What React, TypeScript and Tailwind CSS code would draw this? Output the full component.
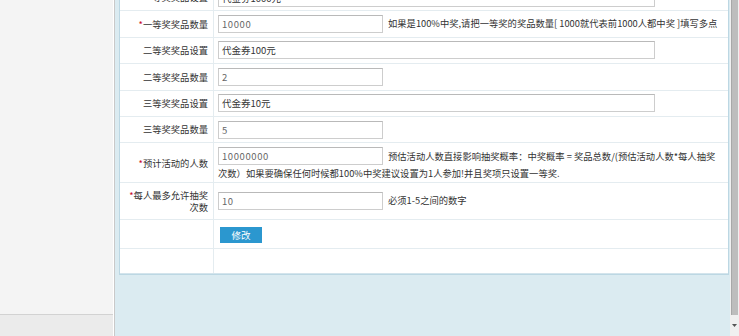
import React from 'react';

const cn = '"Noto Sans CJK SC", "Liberation Sans", sans-serif';

interface Field {
    id: string;
    label: string;
    required?: boolean;
    value: string;
    wide?: boolean;
    hint?: string;
    numeric?: boolean;
}

const fields: Field[] = [
    { id: 'p1set', label: '一等奖奖品设置', required: true, value: '代金券1000元', wide: true },
    { id: 'p1num', label: '一等奖奖品数量', required: true, value: '10000', numeric: true, hint: '如果是100%中奖,请把一等奖的奖品数量[ 1000就代表前1000人都中奖 ]填写多点' },
    { id: 'p2set', label: '二等奖奖品设置', value: '代金券100元', wide: true },
    { id: 'p2num', label: '二等奖奖品数量', value: '2', numeric: true },
    { id: 'p3set', label: '三等奖奖品设置', value: '代金券10元', wide: true },
    { id: 'p3num', label: '三等奖奖品数量', value: '5', numeric: true }
];

const TextInput: React.FC<{ value: string; wide?: boolean; numeric?: boolean }> = ({ value, wide, numeric }) => (
    <input
        readOnly
        value={value}
        className={`${wide ? 'w-[437px]' : 'w-[165px]'} h-[18px] border border-[#cdcdcd] border-t-[#b9b9b9] bg-white px-[3px] align-middle text-[9.5px] outline-none ${numeric ? 'text-[#666] tracking-[0.6px]' : 'text-[#333]'}`}
        style={{ fontFamily: cn }}
    />
);

const Label: React.FC<{ text: string; required?: boolean }> = ({ text, required }) => (
    <div className="w-[94px] shrink-0 border-r border-[#e4ecf0] pr-[5px] pl-[4px] flex items-center justify-end text-right leading-[12.5px]">
        <span>
            {required && <span className="text-[#c8102e]">*</span>}
            {text}
        </span>
    </div>
);

export default function App() {
    return (
        <div className="w-[739px] h-[336px] overflow-hidden flex text-[9.3px] text-[#333]" style={{ fontFamily: cn }}>
            {/* left menu column */}
            <aside className="w-[113px] shrink-0 flex flex-col bg-[#f4f4f4]">
                <div className="h-[314px]" />
                <div className="flex-1 border-t border-[#d2d2d2] bg-[#ebebeb]" />
            </aside>
            <div className="w-[2px] shrink-0 border-l border-white bg-[#c9c9c9]" />

            {/* main frame */}
            <main className="flex-1 bg-[#dbebf1] pl-[4px] pr-[1px] overflow-hidden">
                <div className="bg-white border-l border-r border-b border-[#bcd7e3] -mt-[15px]">
                    {fields.map((f) => (
                        <div key={f.id} className="flex h-[26.4px] border-b border-[#e4ecf0]">
                            <Label text={f.label} required={f.required} />
                            <div className="flex-1 flex items-center pl-[4px]">
                                <TextInput value={f.value} wide={f.wide} numeric={f.numeric} />
                                {f.hint && <span className="ml-[5px]">{f.hint}</span>}
                            </div>
                        </div>
                    ))}

                    <div className="flex h-[40px] border-b border-[#e4ecf0]">
                        <Label text="预计活动的人数" required />
                        <div className="flex-1 pl-[4px] pr-[12px] pt-[4px] leading-[15px]">
                            <TextInput value="10000000" numeric />
                            <span className="ml-[5px] align-middle">
                                预估活动人数直接影响抽奖概率：中奖概率 = 奖品总数/(预估活动人数*每人抽奖次数）如果要确保任何时候都100%中奖建议设置为1人参加!并且奖项只设置一等奖.
                            </span>
                        </div>
                    </div>

                    <div className="flex h-[37px] border-b border-[#e4ecf0]">
                        <Label text="每人最多允许抽奖次数" required />
                        <div className="flex-1 flex items-center pl-[4px]">
                            <TextInput value="10" numeric />
                            <span className="ml-[5px]">必须1-5之间的数字</span>
                        </div>
                    </div>

                    <div className="flex h-[29px] border-b border-[#e4ecf0]">
                        <div className="w-[94px] shrink-0 border-r border-[#e4ecf0]" />
                        <div className="flex-1 pl-[6px] pt-[7px]">
                            <button className="w-[42px] h-[16px] bg-[#2b97cf] text-white text-[9.5px] leading-[16px]">
                                修改
                            </button>
                        </div>
                    </div>

                    <div className="flex h-[25px] border-b border-[#d3e4ec]">
                        <div className="w-[94px] shrink-0 border-r border-[#e4ecf0]" />
                        <div className="flex-1" />
                    </div>
                </div>
            </main>

            {/* scrollbar */}
            <div className="w-[9px] shrink-0 flex flex-col bg-[#f0f0f0]">
                <div className="h-[315px] mx-[1px] bg-[#bdbdbd] border-l border-[#a8a8a8]" />
                <div className="flex-1 flex items-center justify-center">
                    <svg width="5" height="3" viewBox="0 0 5 3">
                        <path d="M0 0h5L2.5 3z" fill="#555" />
                    </svg>
                </div>
            </div>
        </div>
    );
}
